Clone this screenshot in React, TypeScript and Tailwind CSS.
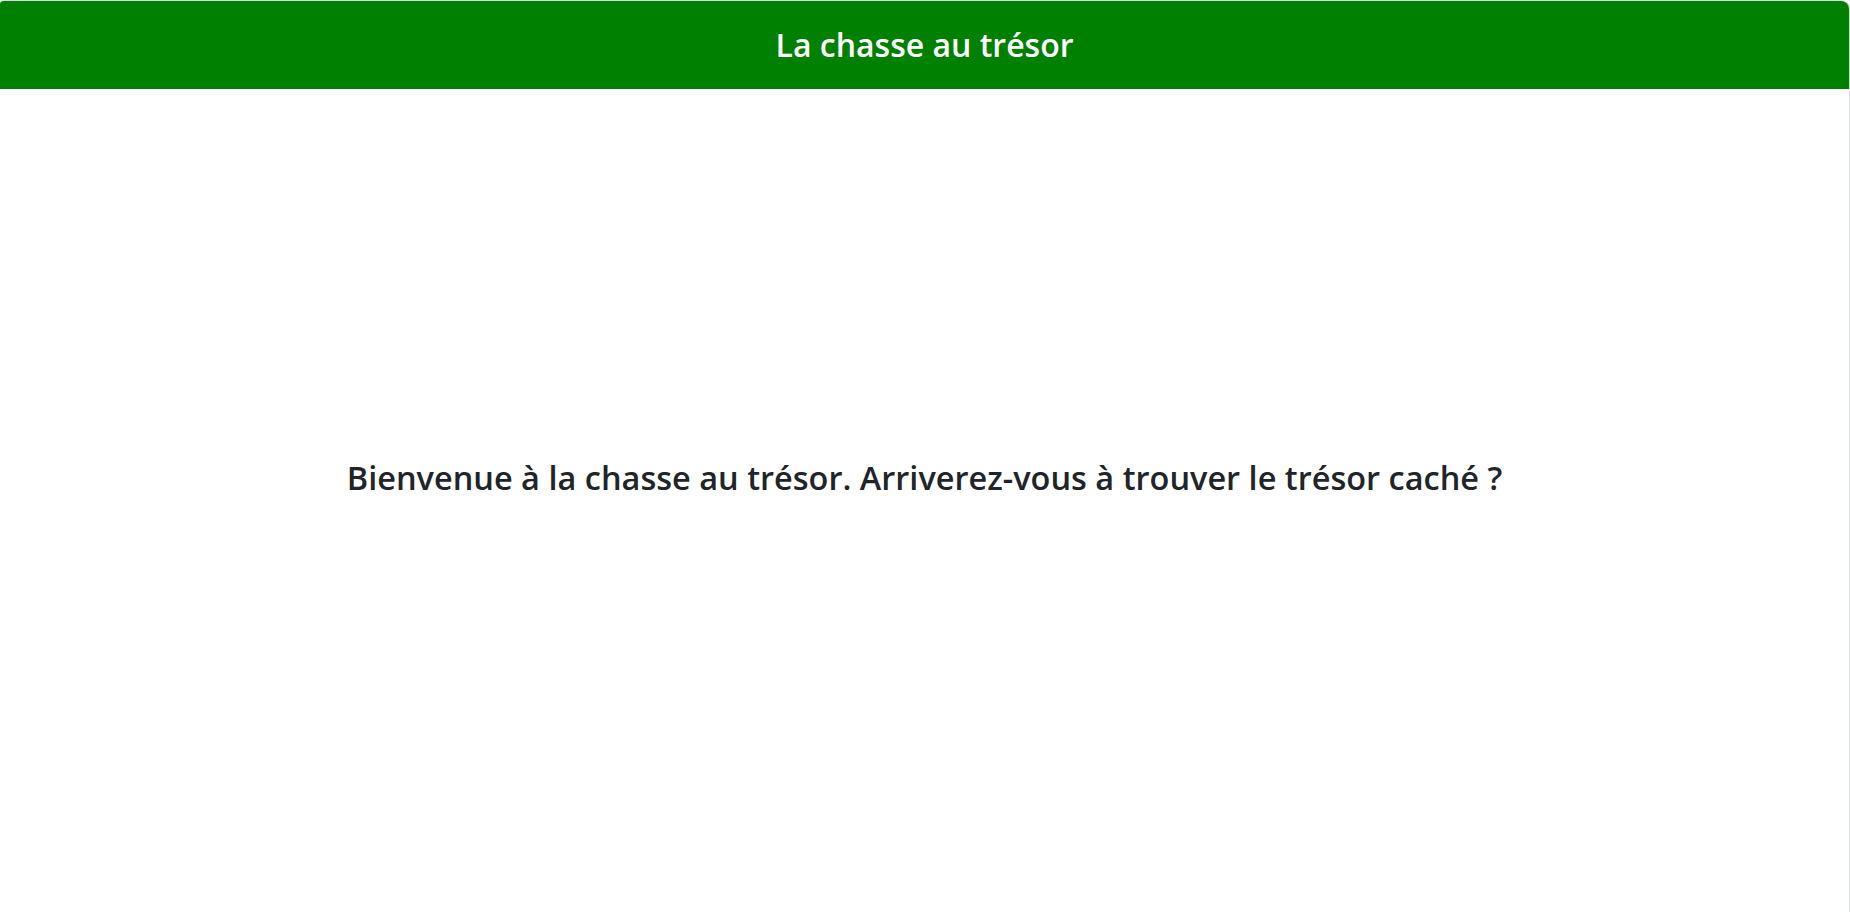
export default function App() {
  return (
    <div className="w-[1850px] h-[912px] overflow-hidden bg-white" style={{ fontFamily: '"Open Sans", "Noto Sans", sans-serif' }}>
      <div className="w-full h-full border-t border-r border-[#d6dbe1] rounded-tr-[9px] rounded-tl-[4px] overflow-hidden flex flex-col">
        <div className="h-[88px] bg-[#008000] flex items-center justify-center shrink-0">
          <h1 className="text-white text-[32px] font-semibold leading-none pb-[1px]">La chasse au trésor</h1>
        </div>
        <div className="flex-1 flex items-center justify-center pb-[44px]">
          <p className="text-[#212529] text-[32.5px] font-semibold leading-none">Bienvenue à la chasse au trésor. Arriverez-vous à trouver le trésor caché ?</p>
        </div>
      </div>
    </div>
  );
}
